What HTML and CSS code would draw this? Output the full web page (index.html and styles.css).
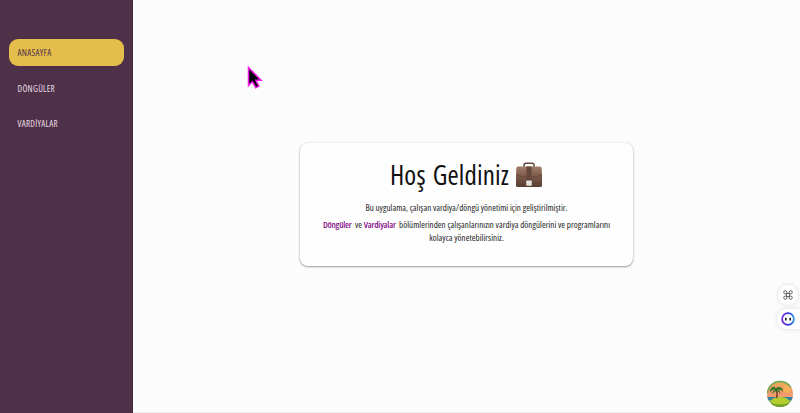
FILE: index.html
```html
<!DOCTYPE html>
<html lang="tr">
<head>
<meta charset="utf-8">
<title>Vardiya Yönetimi</title>
<link rel="stylesheet" href="styles.css">
</head>
<body>
<div class="app">
  <nav class="sidebar">
    <a class="link active">ANASAYFA</a>
    <a class="link">DÖNGÜLER</a>
    <a class="link">VARDİYALAR</a>
  </nav>
  <main class="content">
    <section class="card">
      <h1><span class="title">Hoş Geldiniz</span>
        <svg class="bag" viewBox="0 0 28 26">
          <defs><linearGradient id="leather" x1="0" y1="0" x2="0" y2="1"><stop offset="0" stop-color="#a17d68"/><stop offset=".5" stop-color="#79584a"/><stop offset="1" stop-color="#573d34"/></linearGradient></defs>
          <path d="M9 5V3.200Q9 1.200 11 1.200h6q2 0 2 2V5" fill="none" stroke="#60483d" stroke-width="1.500"/>
          <path d="M3 4.500h22q1.500 0 1.700 2L27 14v9.500q0 1.500-1.500 1.500h-23Q1 25 1 23.500V14l.3-7.500q.2-2 1.700-2z" fill="url(#leather)"/>
          <path d="M1 13q6 2.200 13 2.200T27 13" fill="none" stroke="#604438" stroke-width=".8"/>
          <path d="M11.500 4.500h5v14h-5z" fill="#65473b"/>
          <rect x="11.200" y="18.500" width="5.600" height="5.200" rx=".8" fill="#e3dfda"/>
        </svg>
      </h1>
      <p class="line first">Bu uygulama, çalışan vardiya/döngü yönetimi için geliştirilmiştir.</p>
      <p class="line"><span><b>Döngüler</b>&nbsp; ve <b>Vardiyalar</b>&nbsp; bölümlerinden çalışanlarınızın vardiya döngülerini ve programlarını</span></p>
      <p class="line">kolayca yönetebilirsiniz.</p>
    </section>
  </main>
</div>
<svg class="cursor" viewBox="0 0 16 24"><path d="M1.500 1.500v18l4-3.700 3.200 6 3.200-1.700-3-5.800h5.200z" fill="#000" stroke="#f21bea" stroke-width="1.500"/></svg>
<div class="tool command">
  <svg width="10" height="10" viewBox="0 0 10 10" fill="none" stroke="#555" stroke-width=".9"><circle cx="2.300" cy="2.300" r="1.600"/><circle cx="7.700" cy="2.300" r="1.600"/><circle cx="2.300" cy="7.700" r="1.600"/><circle cx="7.700" cy="7.700" r="1.600"/><path d="M3.500 3.500h3v3h-3z"/></svg>
</div>
<div class="tool assistant">
  <svg width="14" height="14" viewBox="0 0 14 14"><defs><linearGradient id="ring"><stop stop-color="#7b35e8"/><stop offset=".55" stop-color="#3432cf"/><stop offset="1" stop-color="#3298e8"/></linearGradient></defs><circle cx="7" cy="7" r="5.900" fill="#fff" stroke="url(#ring)" stroke-width="1.900"/><path d="M4.800 5.800v2.600M9.200 5.800v2.600" stroke="#17172e" stroke-width="1.600"/></svg>
</div>
<svg class="island" viewBox="0 0 28 28">
  <defs><clipPath id="round"><circle cx="14" cy="14" r="13"/></clipPath><linearGradient id="sky" x1="0" y1="0" x2="0" y2="1"><stop stop-color="#e9b452"/><stop offset=".35" stop-color="#f09765"/><stop offset="1" stop-color="#f0a485"/></linearGradient></defs>
  <g clip-path="url(#round)">
    <path d="M0 0h28v28H0z" fill="url(#sky)"/>
    <circle cx="21" cy="9" r="4" fill="#f4ae59"/>
    <path d="M0 17h28v4H0z" fill="#367f99"/>
    <path d="M0 20h28v8H0z" fill="#78b66c"/>
    <ellipse cx="14" cy="21.500" rx="9" ry="4.500" fill="#b5cd2c"/>
    <path d="M5 23q9 3 18 0l-2 4H7z" fill="#719f20"/>
    <path d="M10.500 18q1.500-4-.5-8" fill="none" stroke="#744426" stroke-width="1.500"/>
    <path d="M10 8Q7 5 4.500 9q-1 1-.5 3Q7 9 9 10q-3 1-3 4 3-3 4-3 3 0 4 3 1-3-2-4 3-1 5 2 0-5-4-5-2 0-3 1z" fill="#39782b"/>
  </g>
  <path d="M1.500 13A12.500 12.500 0 0 1 14 1.500q7 0 11 6" fill="none" stroke="#65a954" stroke-width="1.300"/>
</svg>
</body>
</html>
```
FILE: styles.css
```css
* { box-sizing: border-box; }
body {
  margin: 0;
  height: 413px;
  overflow: hidden;
  background: #fcfcfc;
  font-family: "Open Sans", "Noto Sans", sans-serif;
  font-stretch: 75%;
}
.app { display: flex; height: 413px; border-bottom: 1px solid #eee; }
.sidebar {
  width: 133px;
  height: 413px;
  padding: 39px 8px 0 9px;
  background: #4e3049;
  border-right: 1px solid #44283f;
  display: flex;
  flex-direction: column;
  gap: 8.5px;
}
.link {
  height: 27px;
  padding-left: 8.5px;
  border-radius: 9px;
  display: flex;
  align-items: center;
  font-size: 9px;
  letter-spacing: .3px;
  color: #eadde3;
}
.active { background: #e4bd4b; color: #4e3049; }
.content { flex: 1; display: flex; justify-content: center; padding-top: 143px; }
.card {
  width: 333px;
  height: 122.5px;
  padding-top: 14px;
  border-radius: 8px;
  background: #fefefe;
  box-shadow: 0 1px 2px rgba(0,0,0,.36), 0 0 3px rgba(0,0,0,.1);
  color: #222;
}
h1 {
  margin: 0;
  height: 36px;
  display: flex;
  align-items: center;
  justify-content: center;
  gap: 6px;
  font-size: 27px;
  font-weight: 380;
  letter-spacing: .15px;
  word-spacing: 2px;
  line-height: 36px;
  color: #111;
}
.bag { width: 28px; height: 26px; }
.line {
  margin: 0;
  height: 13px;
  line-height: 13px;
  font-size: 9px;
  letter-spacing: .04px;
  display: flex;
  justify-content: center;
  white-space: nowrap;
}
.first { margin: 8px 0 4px; }
.line b { color: #861089; font-weight: 650; letter-spacing: -.2px; }
.cursor { position: absolute; left: 247px; top: 66px; width: 16px; height: 24px; }
.tool {
  position: absolute;
  display: flex;
  align-items: center;
  background: #fff;
  box-shadow: 0 0 5px rgba(0,0,0,.13);
}
.command { left: 778px; top: 285px; width: 20px; height: 20px; border-radius: 50%; justify-content: center; }
.assistant { left: 777px; top: 309px; width: 23px; height: 20px; padding-left: 4px; border-radius: 10px 0 0 10px; }
.island { position: absolute; left: 766px; top: 380px; width: 28px; height: 28px; }
```
